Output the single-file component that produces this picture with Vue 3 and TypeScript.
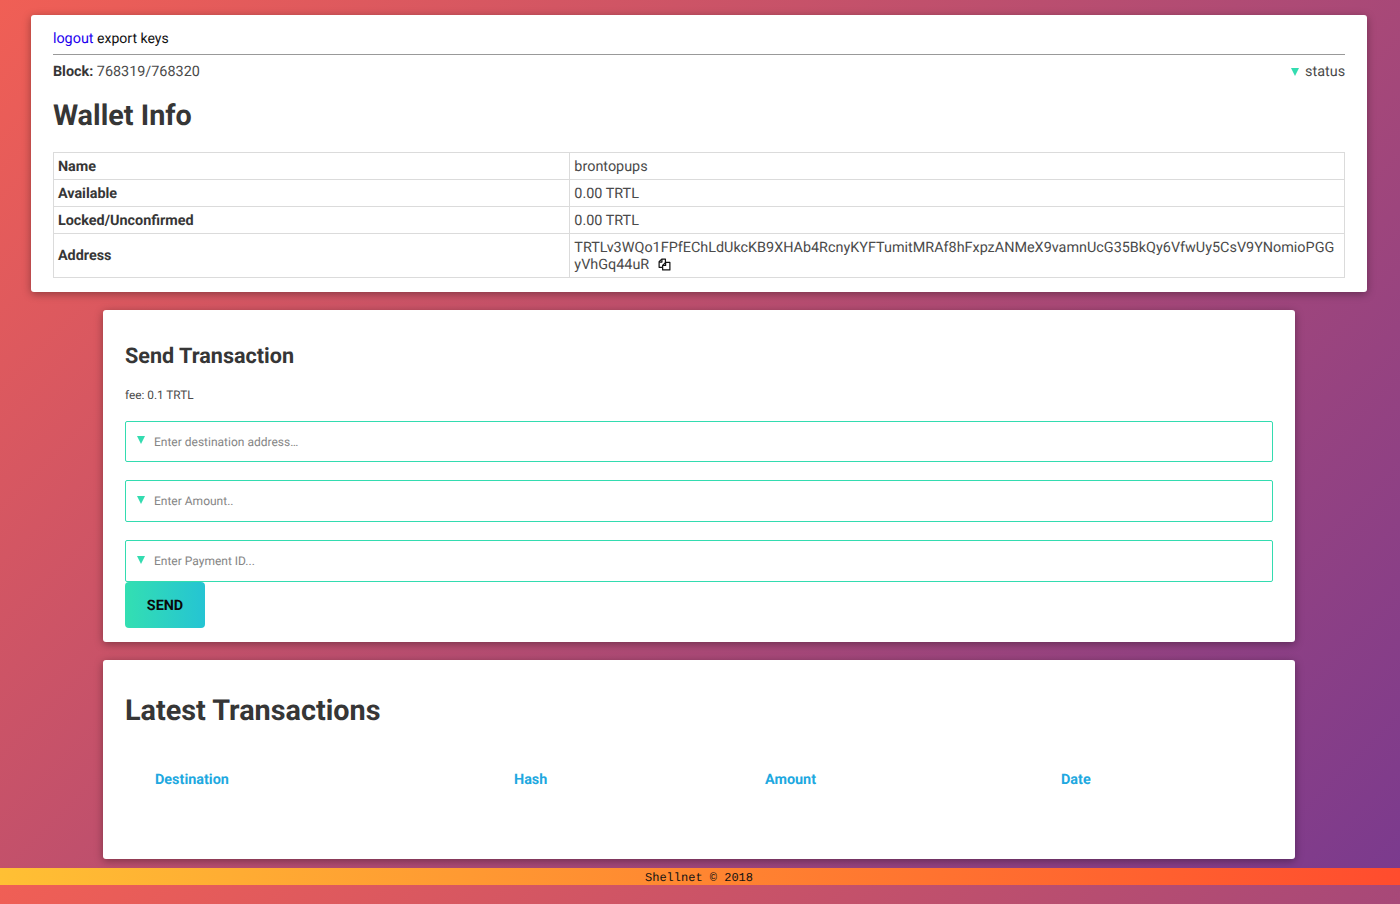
<script setup lang="ts">
const rows: { label: string; value: string }[] = [
  { label: 'Name', value: 'brontopups' },
  { label: 'Available', value: '0.00 TRTL' },
  { label: 'Locked/Unconfirmed', value: '0.00 TRTL' },
]
const address = 'TRTLv3WQo1FPfEChLdUkcKB9XHAb4RcnyKYFTumitMRAf8hFxpzANMeX9vamnUcG35BkQy6VfwUy5CsV9YNomioPGGyVhGq44uR'
const placeholders = ['Enter destination address…', 'Enter Amount..', 'Enter Payment ID...']
const columns = ['Destination', 'Hash', 'Amount', 'Date']
</script>

<template>
  <div class="page">
    <div class="cards">
      <section class="card wallet">
        <nav class="topnav"><a class="logout">logout</a> <span class="keys">export keys</span></nav>
        <div class="statusbar">
          <span><b>Block:</b> 768319/768320</span>
          <span class="status"><i class="tri"></i>status</span>
        </div>
        <h1>Wallet Info</h1>
        <table class="info">
          <tbody>
            <tr v-for="r in rows" :key="r.label">
              <th>{{ r.label }}</th>
              <td>{{ r.value }}</td>
            </tr>
            <tr>
              <th class="addr-label">Address</th>
              <td class="addr">
                {{ address }}
                <svg class="copy" viewBox="0 0 14 14" width="13" height="13" fill="none" stroke="#111" stroke-width="1.3" stroke-linejoin="round">
                  <path d="M5 10H1.2V4L4 1.2H8V5" />
                  <path d="M1.2 4.4H4.2V1.2" />
                  <path d="M8.2 4.8H12.8V12.8H5V8Z" fill="#fff" />
                  <path d="M5 8H8.2V4.8" />
                </svg>
              </td>
            </tr>
          </tbody>
        </table>
      </section>

      <section class="card send">
        <h2>Send Transaction</h2>
        <p class="fee">fee: 0.1 TRTL</p>
        <div class="fields">
          <div v-for="p in placeholders" :key="p" class="field">
            <i class="tri small"></i>
            <input type="text" :placeholder="p" />
          </div>
        </div>
        <button class="btn">SEND</button>
      </section>

      <section class="card latest">
        <h1>Latest Transactions</h1>
        <div class="thead">
          <span v-for="c in columns" :key="c">{{ c }}</span>
        </div>
      </section>
    </div>

    <footer class="foot">Shellnet © 2018</footer>
  </div>
</template>

<style>
html, body { margin: 0; padding: 0; }
</style>

<style scoped>
.page {
  box-sizing: border-box;
  height: 904px;
  padding-top: 15px;
  overflow: hidden;
  background: linear-gradient(135deg, #f05f55 0%, #7a3a8e 100%) 0 0 / 100% 885px repeat;
  font-family: Roboto, sans-serif;
  font-size: 14.4px;
  color: #4a4a4a;
  text-rendering: geometricPrecision;
}
.cards {
  width: 1398px;
}
.card {
  box-sizing: border-box;
  background: #fff;
  border-radius: 3px;
  box-shadow: 0 2px 8px rgba(0, 0, 0, 0.35);
}
.wallet {
  width: 1335.4px;
  height: 277px;
  margin: 0 auto 18px;
  padding: 14px 21.6px 0;
}
.topnav {
  height: 26px;
  padding-top: 1px;
  box-sizing: border-box;
  line-height: 18px;
  color: #111;
  border-bottom: 1px solid #999;
}
.keys { font-size: 14px; }
.logout { color: #2200ee; }
.statusbar {
  display: flex;
  justify-content: space-between;
  margin-top: 8px;
  line-height: 17px;
}
.statusbar b, .info th { color: #363636; }
.status { display: flex; align-items: center; }
.tri {
  display: inline-block;
  width: 0;
  height: 0;
  border-left: 4.5px solid transparent;
  border-right: 4.5px solid transparent;
  border-top: 8.5px solid #33dcb0;
  margin-right: 6px;
}
h1 {
  margin: 0;
  font-size: 28.8px;
  font-weight: 700;
  line-height: 34px;
  color: #363636;
}
.wallet h1 { margin: 19px 0 19px; }
.info {
  width: 100%;
  border-collapse: collapse;
  table-layout: fixed;
  line-height: 17px;
}
.info th, .info td {
  box-sizing: border-box;
  border: 1px solid #dbdbdb;
  padding: 5px 4px 4px;
  text-align: left;
  vertical-align: middle;
}
.info th { width: 40%; font-weight: 700; }
.info .addr-label { padding-bottom: 6px; }
.info .addr { word-break: break-all; }
.copy { vertical-align: -2px; margin-left: 5px; }
.send {
  width: 1192px;
  height: 332px;
  margin: 0 auto 18px;
  padding: 34px 22px 0;
}
h2 {
  margin: 0;
  font-size: 21.6px;
  font-weight: 700;
  line-height: 25px;
  color: #363636;
}
.fee {
  margin: 19px 0 0;
  font-size: 11.8px;
  line-height: 14px;
}
.fields {
  display: flex;
  flex-direction: column;
  gap: 18px;
  margin-top: 19px;
}
.field {
  box-sizing: border-box;
  height: 42px;
  display: flex;
  align-items: center;
  padding: 0 10px 0 11px;
  border: 1px solid #33dcb0;
  border-radius: 2px;
}
.field:first-child { height: 41px; }
.tri.small { margin: -3px 9px 0 0; }
.field input {
  flex: 1;
  border: 0;
  outline: 0;
  padding: 0;
  font: 12px Roboto, sans-serif;
  text-rendering: geometricPrecision;
  color: #363636;
}
.field input::placeholder { color: #858585; opacity: 1; }
.btn {
  display: block;
  width: 80px;
  height: 46px;
  padding: 1px 0 0;
  border: 0;
  border-radius: 4px;
  background: linear-gradient(90deg, #33dfb2 0%, #25c4d3 100%);
  color: #0a0a0a;
  font: 700 14.4px Roboto, sans-serif;
  text-rendering: geometricPrecision;
}
.latest {
  width: 1192px;
  height: 199px;
  margin: 0 auto;
  padding: 34px 22px 0;
}
.thead {
  display: grid;
  grid-template-columns: 359px 251px 296px 1fr;
  margin-top: 43px;
  padding-left: 30px;
  line-height: 17px;
  font-weight: 700;
  color: #20a8e0;
}
.foot {
  margin-top: 9px;
  height: 17px;
  line-height: 21px;
  text-align: center;
  padding-right: 2px;
  font-family: 'Liberation Mono', monospace;
  font-size: 12px;
  color: #111;
  background: linear-gradient(90deg, #ffc034 0%, #ff4c2e 100%);
}
</style>
